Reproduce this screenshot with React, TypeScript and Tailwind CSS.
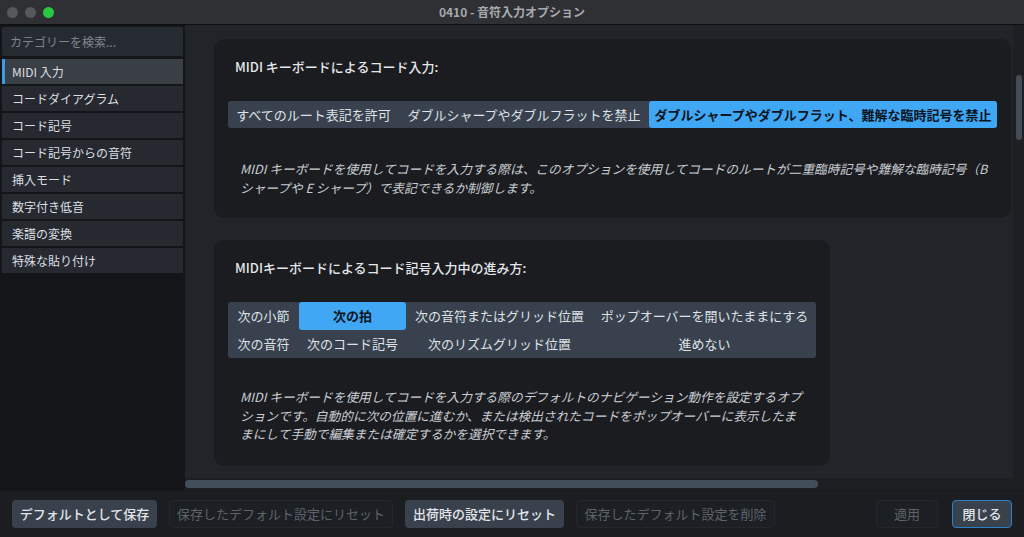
import React from "react";

const font = { fontFamily: '"Noto Sans CJK JP", "Noto Sans", sans-serif' };

const sideItems = [
  "MIDI 入力",
  "コードダイアグラム",
  "コード記号",
  "コード記号からの音符",
  "挿入モード",
  "数字付き低音",
  "楽譜の変換",
  "特殊な貼り付け",
];

function Seg({ label, w, selected }: { label: string; w: string; selected?: boolean }) {
  return (
    <div
      className={
        "flex h-full items-center justify-center whitespace-nowrap rounded-[3px] " +
        w +
        (selected ? " bg-[#3fa7f3] font-bold text-[#0b1420]" : " text-[#dfe2e6]")
      }
    >
      {label}
    </div>
  );
}

function Cell({ label, selected }: { label: string; selected?: boolean }) {
  return (
    <div
      className={
        "flex h-[28px] items-center justify-center whitespace-nowrap rounded-[3px] " +
        (selected ? "bg-[#3fa7f3] font-bold text-[#0b1420]" : "text-[#dfe2e6]")
      }
    >
      {label}
    </div>
  );
}

function Btn({ label, w, kind }: { label: string; w: string; kind: "on" | "off" | "close" }) {
  const cls =
    kind === "on"
      ? "bg-[#38414c] text-[#e3e6ea] font-medium"
      : kind === "close"
      ? "bg-[#38414c] text-[#e3e6ea] font-medium border border-[#2b7fc6]"
      : "bg-[#1c1f23] text-[#5e636a] border border-[#24272b]";
  return (
    <div className={"flex h-[28px] items-center justify-center whitespace-nowrap rounded-[4px] text-[13px] " + w + " " + cls}>
      {label}
    </div>
  );
}

export default function App() {
  return (
    <div style={font} className="flex h-[537px] w-[1024px] flex-col overflow-hidden bg-[#1b1d21]">
      {/* title bar */}
      <div className="relative flex h-[25px] shrink-0 items-center border-b border-[#0e0f11] bg-[#2e3034]">
        <div className="flex items-center gap-[7px] pl-[7px]">
          <div className="h-[11px] w-[11px] rounded-full bg-[#56585c]" />
          <div className="h-[11px] w-[11px] rounded-full bg-[#56585c]" />
          <div className="h-[11px] w-[11px] rounded-full bg-[#2ac840]" />
        </div>
        <div className="absolute inset-0 flex items-center justify-center text-[12px] font-bold text-[#a7a9ad]">
          0410 - 音符入力オプション
        </div>
      </div>

      {/* main */}
      <div className="flex h-[465px] shrink-0">
        {/* sidebar */}
        <div className="flex w-[185px] shrink-0 flex-col gap-[2px] bg-[#141518] pl-[2px] pr-[2px] pt-[2px]">
          <div className="mb-[1px] flex h-[29px] items-center rounded-[2px] bg-[#262b32] pl-[8px] text-[12px] text-[#80868d]">
            カテゴリーを検索...
          </div>
          {sideItems.map((s, i) => (
            <div
              key={s}
              className={
                "relative flex h-[25px] items-center pl-[10px] text-[12px] text-[#dcdfe2] " +
                (i === 0 ? "bg-[#3a3e45]" : "bg-[#262a30]")
              }
            >
              {i === 0 && <div className="absolute left-0 top-0 h-full w-[3px] bg-[#3a9be8]" />}
              {s}
            </div>
          ))}
        </div>

        {/* content column */}
        <div className="flex min-w-0 flex-1 flex-col">
          <div className="flex min-h-0 flex-1">
            <div className="flex min-w-0 flex-1 flex-col items-start gap-[22px] overflow-hidden bg-[#212428] pl-[29px] pt-[14px] text-[13px]">
              {/* card 1 */}
              <div className="shrink-0 rounded-[10px] bg-[#1a1c20] px-[14px] pb-[21px] pt-[18px]">
                <div className="pl-[7px] leading-[20px] font-medium text-[#e4e6e9]">MIDI キーボードによるコード入力:</div>
                <div className="mt-[24px] flex h-[27px] w-[769px] rounded-[3px] bg-[#38414d]">
                  <Seg label="すべてのルート表記を許可" w="w-[171px]" />
                  <Seg label="ダブルシャープやダブルフラットを禁止" w="w-[250px]" />
                  <Seg label="ダブルシャープやダブルフラット、難解な臨時記号を禁止" w="w-[348px]" selected />
                </div>
                <div className="mt-[32px] pl-[12px] text-[12.7px] italic leading-[18.5px] text-[#c9cdd2]">
                  <div className="whitespace-nowrap">MIDI キーボードを使用してコードを入力する際は、このオプションを使用してコードのルートが二重臨時記号や難解な臨時記号（B</div>
                  <div className="whitespace-nowrap">シャープや E シャープ）で表記できるか制御します。</div>
                </div>
              </div>

              {/* card 2 */}
              <div className="shrink-0 rounded-[10px] bg-[#1a1c20] px-[14px] pb-[22px] pt-[18px]">
                <div className="pl-[7px] leading-[20px] font-medium text-[#e4e6e9]">MIDIキーボードによるコード記号入力中の進み方:</div>
                <div className="mt-[24px] grid w-[588px] grid-cols-[71px_107px_187px_223px] rounded-[3px] bg-[#38414d]">
                  <Cell label="次の小節" />
                  <Cell label="次の拍" selected />
                  <Cell label="次の音符またはグリッド位置" />
                  <Cell label="ポップオーバーを開いたままにする" />
                  <Cell label="次の音符" />
                  <Cell label="次のコード記号" />
                  <Cell label="次のリズムグリッド位置" />
                  <Cell label="進めない" />
                </div>
                <div className="mt-[30px] pl-[12px] text-[12.7px] italic leading-[18.5px] text-[#c9cdd2]">
                  <div className="whitespace-nowrap">MIDI キーボードを使用してコードを入力する際のデフォルトのナビゲーション動作を設定するオプ</div>
                  <div className="whitespace-nowrap">ションです。自動的に次の位置に進むか、または検出されたコードをポップオーバーに表示したま</div>
                  <div className="whitespace-nowrap">まにして手動で編集または確定するかを選択できます。</div>
                </div>
              </div>
            </div>
            {/* vertical scrollbar */}
            <div className="w-[11px] shrink-0 bg-[#1d1f23] pt-[50px]">
              <div className="ml-[3px] h-[65px] w-[6px] rounded-full bg-[#444c57]" />
            </div>
          </div>
          {/* horizontal scrollbar */}
          <div className="flex h-[12px] shrink-0 items-center bg-[#1c1e22]">
            <div className="h-[8px] w-[633px] rounded-full bg-[#434e5b]" />
          </div>
        </div>
      </div>

      {/* footer */}
      <div className="flex flex-1 items-center border-t border-[#17191c] bg-[#1b1d21] px-[12px]">
        <div className="flex items-center gap-[12px]">
          <Btn label="デフォルトとして保存" w="w-[145px]" kind="on" />
          <Btn label="保存したデフォルト設定にリセット" w="w-[224px]" kind="off" />
          <Btn label="出荷時の設定にリセット" w="w-[159px]" kind="on" />
          <Btn label="保存したデフォルト設定を削除" w="w-[199px]" kind="off" />
        </div>
        <div className="ml-auto flex items-center gap-[14px]">
          <Btn label="適用" w="w-[62px]" kind="off" />
          <Btn label="閉じる" w="w-[60px]" kind="close" />
        </div>
      </div>
    </div>
  );
}
